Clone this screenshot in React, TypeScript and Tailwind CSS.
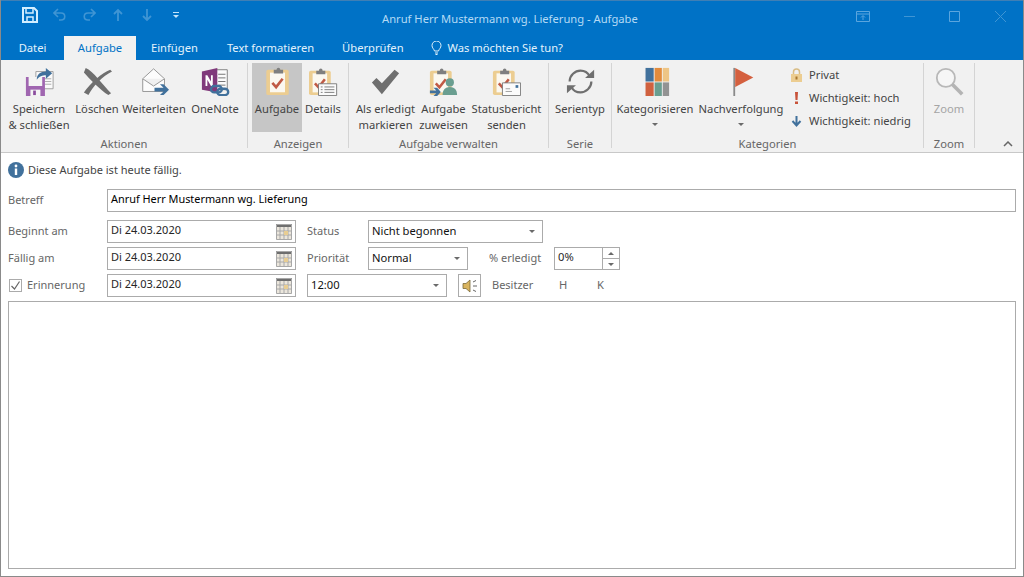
import type { ReactNode } from "react";

const ICON = 29;

function Clipboard({ x = 0 }: { x?: number }) {
  return (
    <g transform={`translate(${x} 0)`}>
      <rect x="3" y="4" width="24" height="27" rx="2" fill="#eccd91" />
      <rect x="7" y="7" width="16" height="21" fill="#fbf8f0" />
      <path d="M11 7V4h3c0-3 4-3 4 0h3v4H11z" fill="#7f7f7f" />
      <path d="M9.500 18l4 4.500 7-9" fill="none" stroke="#c05a45" strokeWidth="2.800" />
    </g>
  );
}

function SaveCloseIcon() {
  return (
    <svg width={ICON} height={ICON} viewBox="0 0 32 32">
      <path d="M12 5h19v19H12z" fill="#fafafa" stroke="#9a9a9a" />
      <path d="M22 13h7M22 16h7M22 19h7" stroke="#a8a8a8" />
      <path d="M1 11h21v21H1z" fill="#a066b0" />
      <path d="M4 11h15v10H4z" fill="#f4f4f4" />
      <path d="M6 25h11v7H6z" fill="#f4f4f4" />
      <path d="M9 26h3v5H9z" fill="#8b4d9e" />
      <path d="M13 14c0-6 4-9 10-9V1l7 6-7 6V9c-4 0-7 1-10 5z" fill="#41719c" />
    </svg>
  );
}

function DeleteIcon() {
  return (
    <svg width={ICON} height={ICON} viewBox="0 0 32 32">
      <path d="M3 1c8 3 19 19 28 28l-3 2C19 25 7 13 1 6z" fill="#6f6f6f" />
      <path d="M30 3C21 6 8 18 1 28l5 3C11 21 22 10 32 5z" fill="#6f6f6f" />
    </svg>
  );
}

function ForwardIcon() {
  return (
    <svg width={ICON} height={ICON} viewBox="0 0 32 32">
      <path d="M3 13L15 2l12 11v14H3z" fill="#fcfcfc" stroke="#8f8f8f" />
      <path d="M3 13l12 8 12-8" fill="#f0f0f0" stroke="#8f8f8f" />
      <path d="M16 23h10l-4-4h4l6 6-6 6h-4l4-4H16z" fill="#41719c" />
    </svg>
  );
}

function OneNoteIcon() {
  return (
    <svg width={ICON} height={ICON} viewBox="0 0 32 32">
      <path d="M14 3h15v22H14z" fill="#fbfbfb" stroke="#7a7a7a" />
      <path d="M19 8h8M19 12h8M19 16h8M19 20h8" stroke="#6a6a6a" />
      <path d="M1 5l17-4v27L1 25z" fill="#80397b" />
      <path d="M5 9h2l4 7V9h2v12h-2l-4-7v7H5z" fill="#fff" />
      <rect x="11" y="21" width="12" height="7" rx="3.500" fill="none" stroke="#41719c" strokeWidth="2.600" />
      <rect x="18" y="24" width="12" height="7" rx="3.500" fill="none" stroke="#41719c" strokeWidth="2.600" />
    </svg>
  );
}

function TaskIcon() {
  return (
    <svg width={ICON} height={ICON} viewBox="2 1 28 31">
      <Clipboard x={1} />
    </svg>
  );
}

function DetailsIcon() {
  return (
    <svg width={ICON} height={ICON} viewBox="0 0 32 32">
      <Clipboard x={-3} />
      <path d="M10.500 18.500h20v13h-20z" fill="#fbfbfb" stroke="#777" />
      <path d="M13 22h2M17 22h11M13 25h2M17 25h11M13 28h2M17 28h11" stroke="#777" />
    </svg>
  );
}

function CheckIcon() {
  return (
    <svg width={ICON} height={ICON} viewBox="0 0 32 32">
      <path d="M1 17l5-5 6 6L26 3l5 4-19 23z" fill="#6f6f6f" />
    </svg>
  );
}

function AssignIcon() {
  return (
    <svg width={ICON} height={ICON} viewBox="0 0 32 32">
      <Clipboard x={-2} />
      <circle cx="23" cy="17" r="4.500" fill="#6a9e90" />
      <path d="M15 31c0-6 3-9 8-9s8 3 8 9z" fill="#6a9e90" />
      <path d="M1 26h7l-3-3h4l4 4.500L9 32H5l3-3H1z" fill="#41719c" />
    </svg>
  );
}

function StatusIcon() {
  return (
    <svg width={ICON} height={ICON} viewBox="0 0 32 32">
      <Clipboard x={-2} />
      <path d="M11.500 17.500h20v14h-20z" fill="#fbfbfb" stroke="#777" />
      <path d="M15 27h7M15 24h5" stroke="#999" />
      <path d="M26 20h3v3h-3z" fill="#41719c" />
    </svg>
  );
}

function RecurrenceIcon() {
  return (
    <svg width={ICON} height={ICON} viewBox="0 0 32 32">
      <path d="M4 16C4 9 10 4 16 4c5 0 8 2 10 6" fill="none" stroke="#6f6f6f" strokeWidth="2.400" />
      <path d="M21 12h10V3z" fill="#6f6f6f" />
      <path d="M28 16c0 7-6 12-12 12-5 0-8-2-10-6" fill="none" stroke="#6f6f6f" strokeWidth="2.400" />
      <path d="M11 20H1v9z" fill="#6f6f6f" />
    </svg>
  );
}

function CategorizeIcon() {
  return (
    <svg width={ICON} height={ICON} viewBox="0 0 32 32">
      <path d="M5 1h9v15H5z" fill="#41719c" />
      <path d="M15 1h8v15h-8z" fill="#e28b3c" />
      <path d="M24 1h7v15h-7z" fill="#eec585" />
      <path d="M5 17h9v15H5z" fill="#d0613f" />
      <path d="M15 17h8v15h-8z" fill="#6a9e90" />
      <path d="M24 17h7v15h-7z" fill="#939393" />
    </svg>
  );
}

function FlagIcon() {
  return (
    <svg width={ICON} height={ICON} viewBox="0 0 32 32">
      <path d="M7 1h2v31H7z" fill="#8a8a8a" />
      <path d="M9 1l20 10.500L9 22z" fill="#d4603f" />
    </svg>
  );
}

function ZoomIcon() {
  return (
    <svg width={ICON} height={ICON} viewBox="0 0 32 32">
      <circle cx="12" cy="12" r="10" fill="#f6f6f6" stroke="#b8b8b8" strokeWidth="2" />
      <path d="M19 19l11 11" stroke="#b4b4b4" strokeWidth="4" />
    </svg>
  );
}

function CalendarIcon() {
  return (
    <svg width="16" height="16" viewBox="0 0 16 16" className="shrink-0">
      <path d="M0 0h16v16H0z" fill="#ebe6dc" />
      <path d="M0 0h16v3H0z" fill="#6e6e6e" />
      <path d="M.5 .5h15v15H.5zM4 3v13M8 3v13M12 3v13M0 7h16M0 11h16" fill="none" stroke="#a8a8a8" strokeWidth="1" />
      <path d="M8 7h4v4H8z" fill="#e8cd92" />
    </svg>
  );
}

function Caret() {
  return <span className="block h-0 w-0 border-x-[3px] border-t-[3px] border-x-transparent border-t-[#6a6a6a]" />;
}

function RibbonButton({ icon, lines, w, caret, active, muted }: { icon: ReactNode; lines: string[]; w: string; caret?: boolean; active?: boolean; muted?: boolean }) {
  return (
    <div className={`flex h-[69px] shrink-0 flex-col items-center pt-[4px] leading-[16px] ${w} ${active ? "bg-[#c6c6c6]" : ""} ${muted ? "text-[#a5a5a5]" : "text-[#444]"}`}>
      <div className="mb-[5px] h-[29px]">{icon}</div>
      {lines.map((line) => (
        <span key={line} className="whitespace-nowrap">{line}</span>
      ))}
      {caret && <span className="mt-[6px]"><Caret /></span>}
    </div>
  );
}

function Group({ label, w, children }: { label: string; w: string; children: ReactNode }) {
  return (
    <div className={`flex h-[85px] shrink-0 flex-col border-r border-[#d4d4d4] ${w}`}>
      <div className="flex flex-1 justify-center">{children}</div>
      <div className="-mb-[2px] text-center leading-[12px] text-[#666]">{label}</div>
    </div>
  );
}

function Label({ children, w }: { children: ReactNode; w: string }) {
  return <div className={`shrink-0 pb-[1px] text-[11px] text-[#666] ${w}`}>{children}</div>;
}

function DateField() {
  return (
    <div className="flex h-[23px] w-[189px] shrink-0 items-center justify-between border border-[#ababab] pl-[3px] pr-[3px] text-[11px] text-[#262626]">
      <span className="pb-[2px]">Di 24.03.2020</span>
      <CalendarIcon />
    </div>
  );
}

function SelectField({ value, w }: { value: string; w: string }) {
  return (
    <div className={`flex h-[23px] shrink-0 items-center justify-between border border-[#ababab] pl-[3px] pr-[7px] text-[#111] ${w}`}>
      <span className="pb-[1px]">{value}</span>
      <Caret />
    </div>
  );
}

export default function App() {
  return (
    <div className="flex h-[577px] w-[1024px] flex-col overflow-hidden border-x border-b border-[#8a8a8a] bg-white font-['Noto_Sans',sans-serif] text-[11.2px]">
      {/* title bar */}
      <div className="flex h-[36px] shrink-0 items-center border-t border-[#3f7fb5] bg-[#0072c6]">
        <div className="flex w-[255px] items-center pb-[7px] pl-[21px]">
          <svg width="16" height="16" viewBox="0 0 16 16" className="mr-[15px]">
            <path d="M1 1h11l3 3v11H1z" fill="none" stroke="#d3eeff" strokeWidth="2" />
            <path d="M4 1h7v5H4zM5 10h6v5H5z" fill="none" stroke="#d3eeff" strokeWidth="1.500" />
          </svg>
          <svg width="14" height="14" viewBox="0 0 14 14" className="mr-[15px]">
            <path d="M5 1L1 5l4 4M1 5h7c5 0 5 7 0 7H6" fill="none" stroke="#3f95d4" strokeWidth="1.600" />
          </svg>
          <svg width="14" height="14" viewBox="0 0 14 14" className="mr-[15px]">
            <path d="M9 1l4 4-4 4M13 5H6c-5 0-5 7 0 7h2" fill="none" stroke="#3f95d4" strokeWidth="1.600" />
          </svg>
          <svg width="14" height="14" viewBox="0 0 14 14" className="mr-[15px]">
            <path d="M7 13V2M3 6l4-4 4 4" fill="none" stroke="#3f95d4" strokeWidth="1.800" />
          </svg>
          <svg width="14" height="14" viewBox="0 0 14 14" className="mr-[18px]">
            <path d="M7 1v11M3 8l4 4 4-4" fill="none" stroke="#3f95d4" strokeWidth="1.800" />
          </svg>
          <svg width="8" height="8" viewBox="0 0 8 8">
            <path d="M1 1.500h6" stroke="#c4e4fa" />
            <path d="M1 4h6L4 7z" fill="#c4e4fa" />
          </svg>
        </div>
        <div className="flex-1 pl-[126px] pt-[1px] text-[#b4daf5]">Anruf Herr Mustermann wg. Lieferung - Aufgabe</div>
        <div className="flex items-center gap-[34px] pb-[5px] pr-[16px]">
          <svg width="14" height="11" viewBox="0 0 14 11">
            <path d="M.5 .5h13v10H.5zM.5 3h13M7 9V5M5 6.500l2-2 2 2" fill="none" stroke="#5aa5de" />
          </svg>
          <svg width="11" height="11" viewBox="0 0 11 11">
            <path d="M0 5.500h11" stroke="#3f95d4" />
          </svg>
          <svg width="11" height="11" viewBox="0 0 11 11">
            <path d="M.5 .5h10v10H.5z" fill="none" stroke="#5aa5de" />
          </svg>
          <svg width="13" height="13" viewBox="0 0 13 13">
            <path d="M1 1l11 11M12 1L1 12" stroke="#3f95d4" />
          </svg>
        </div>
      </div>

      {/* tabs */}
      <div className="flex h-[24px] shrink-0 items-stretch bg-[#0072c6] text-[#e3f2fc]">
        <div className="flex w-[63px] items-center justify-center">Datei</div>
        <div className="flex w-[72px] items-center justify-center bg-[#f1f1f1] text-[#0072c6]">Aufgabe</div>
        <div className="ml-[15px] flex items-center">Einfügen</div>
        <div className="ml-[29px] flex items-center">Text formatieren</div>
        <div className="ml-[28px] flex items-center">Überprüfen</div>
        <div className="ml-[27px] flex items-center gap-[6px]">
          <svg width="11" height="14" viewBox="0 0 11 14">
            <path d="M3.500 10C3 8 1 7 1 4.500a4.500 4.500 0 0 1 9 0C10 7 8 8 7.500 10zM4 12h3M4.500 13.500h2" fill="none" stroke="#e3f2fc" />
          </svg>
          <span>Was möchten Sie tun?</span>
        </div>
      </div>

      {/* ribbon */}
      <div className="flex h-[93px] shrink-0 items-start border-b border-[#c8c8c8] bg-[#f1f1f1] pt-[3px]">
        <Group label="Aktionen" w="w-[247px]">
          <RibbonButton icon={<SaveCloseIcon />} lines={["Speichern", "& schließen"]} w="w-[68px]" />
          <RibbonButton icon={<DeleteIcon />} lines={["Löschen"]} w="w-[48px]" />
          <RibbonButton icon={<ForwardIcon />} lines={["Weiterleiten"]} w="w-[66px]" />
          <RibbonButton icon={<OneNoteIcon />} lines={["OneNote"]} w="w-[56px]" />
        </Group>
        <Group label="Anzeigen" w="w-[101px]">
          <RibbonButton icon={<TaskIcon />} lines={["Aufgabe"]} w="w-[50px]" active />
          <RibbonButton icon={<DetailsIcon />} lines={["Details"]} w="w-[42px]" />
        </Group>
        <Group label="Aufgabe verwalten" w="w-[200px]">
          <RibbonButton icon={<CheckIcon />} lines={["Als erledigt", "markieren"]} w="w-[64px]" />
          <RibbonButton icon={<AssignIcon />} lines={["Aufgabe", "zuweisen"]} w="w-[52px]" />
          <RibbonButton icon={<StatusIcon />} lines={["Statusbericht", "senden"]} w="w-[74px]" />
        </Group>
        <Group label="Serie" w="w-[63px]">
          <RibbonButton icon={<RecurrenceIcon />} lines={["Serientyp"]} w="w-[56px]" />
        </Group>
        <Group label="Kategorien" w="w-[312px]">
          <RibbonButton icon={<CategorizeIcon />} lines={["Kategorisieren"]} w="w-[78px]" caret />
          <RibbonButton icon={<FlagIcon />} lines={["Nachverfolgung"]} w="w-[94px]" caret />
          <div className="ml-[2px] flex w-[129px] flex-col gap-[5px] pt-[3px] text-[#444]">
            <div className="flex h-[18px] items-center gap-[6px]">
              <svg width="13" height="14" viewBox="0 0 13 14">
                <path d="M3.500 6V4a3 3 0 0 1 6 0v2" fill="none" stroke="#d9bd85" strokeWidth="1.500" />
                <path d="M1 6h11v8H1z" fill="#eccd91" />
                <path d="M5.500 8.500h2v3h-2z" fill="#a9772f" />
              </svg>
              Privat
            </div>
            <div className="flex h-[18px] items-center gap-[6px]">
              <svg width="13" height="14" viewBox="0 0 13 14">
                <path d="M5 1h3l-.5 8h-2zM5 10.500h3V13H5z" fill="#c8533a" />
              </svg>
              Wichtigkeit: hoch
            </div>
            <div className="flex h-[18px] items-center gap-[6px]">
              <svg width="13" height="14" viewBox="0 0 13 14">
                <path d="M6.500 2v9M2.500 7l4 4.500 4-4.500" fill="none" stroke="#41719c" strokeWidth="2" />
              </svg>
              Wichtigkeit: niedrig
            </div>
          </div>
        </Group>
        <Group label="Zoom" w="w-[51px]">
          <RibbonButton icon={<ZoomIcon />} lines={["Zoom"]} w="w-[50px]" muted />
        </Group>
        <div className="flex h-[88px] flex-1 items-end justify-end pb-[4px] pr-[10px]">
          <svg width="10" height="6" viewBox="0 0 10 6">
            <path d="M1 5l4-4 4 4" fill="none" stroke="#666" strokeWidth="1.500" />
          </svg>
        </div>
      </div>

      {/* form */}
      <div className="flex min-h-0 flex-1 flex-col px-[7px] pb-[7px]">
        <div className="flex h-[36px] shrink-0 items-center gap-[4px] pb-[2px] text-[11px] text-[#444]">
          <svg width="16" height="16" viewBox="0 0 16 16">
            <circle cx="8" cy="8" r="8" fill="#41719c" />
            <circle cx="8" cy="4" r="1.400" fill="#fff" />
            <path d="M6.800 6.500h2.400V13H6.800z" fill="#fff" />
          </svg>
          <span>Diese Aufgabe ist heute fällig.</span>
        </div>
        <div className="flex h-[23px] shrink-0 items-center">
          <Label w="w-[99px]">Betreff</Label>
          <div className="flex h-full flex-1 items-center border border-[#ababab] pb-[2px] pl-[3px] text-[10.900px] text-black">
            Anruf Herr Mustermann wg. Lieferung
          </div>
        </div>
        <div className="mt-[8px] flex h-[23px] shrink-0 items-center">
          <Label w="w-[99px]">Beginnt am</Label>
          <DateField />
          <Label w="w-[72px] pl-[11px]">Status</Label>
          <SelectField value="Nicht begonnen" w="w-[175px]" />
        </div>
        <div className="mt-[4px] flex h-[23px] shrink-0 items-center">
          <Label w="w-[99px]">Fällig am</Label>
          <DateField />
          <Label w="w-[72px] pl-[11px]">Priorität</Label>
          <SelectField value="Normal" w="w-[100px]" />
          <Label w="w-[86px] pl-[21px]">% erledigt</Label>
          <div className="flex h-[23px] w-[49px] items-center border border-[#ababab] pb-[2px] pl-[3px] text-[#262626]">0%</div>
          <div className="flex h-[23px] w-[17px] flex-col border-y border-r border-[#ababab]">
            <div className="flex flex-1 items-center justify-center border-b border-[#ababab]">
              <span className="block h-0 w-0 border-x-[3px] border-b-[3px] border-x-transparent border-b-[#6a6a6a]" />
            </div>
            <div className="flex flex-1 items-center justify-center">
              <Caret />
            </div>
          </div>
        </div>
        <div className="mt-[4px] flex h-[23px] shrink-0 items-center">
          <div className="flex w-[99px] shrink-0 items-center gap-[5px] pl-[1px] text-[11px] text-[#666]">
            <div className="flex h-[13px] w-[13px] items-center justify-center border border-[#ababab]">
              <svg width="11" height="11" viewBox="0 0 11 11">
                <path d="M1.500 6l3 3 5-7.500" fill="none" stroke="#666" strokeWidth="1.200" />
              </svg>
            </div>
            <span className="pb-[1px]">Erinnerung</span>
          </div>
          <DateField />
          <div className="ml-[11px] shrink-0">
            <SelectField value="12:00" w="w-[140px]" />
          </div>
          <div className="ml-[11px] flex h-[23px] w-[23px] shrink-0 items-center justify-center border border-[#ababab]">
            <svg width="16" height="14" viewBox="0 0 16 14">
              <path d="M1 4.500h3L8 1v12L4 9.500H1z" fill="#d9b45f" stroke="#7a6a3a" strokeWidth=".8" />
              <path d="M11 3l3-1.500M11 7h4M11 11l3 1.500" stroke="#666" />
            </svg>
          </div>
          <Label w="w-[78px] pl-[11px]">Besitzer</Label>
          <span className="w-[38px] pb-[1px] text-[#666]">H</span>
          <span className="pb-[1px] text-[#666]">K</span>
        </div>
        <div className="mt-[4px] min-h-0 flex-1 border border-[#ababab] bg-white" />
      </div>
    </div>
  );
}
